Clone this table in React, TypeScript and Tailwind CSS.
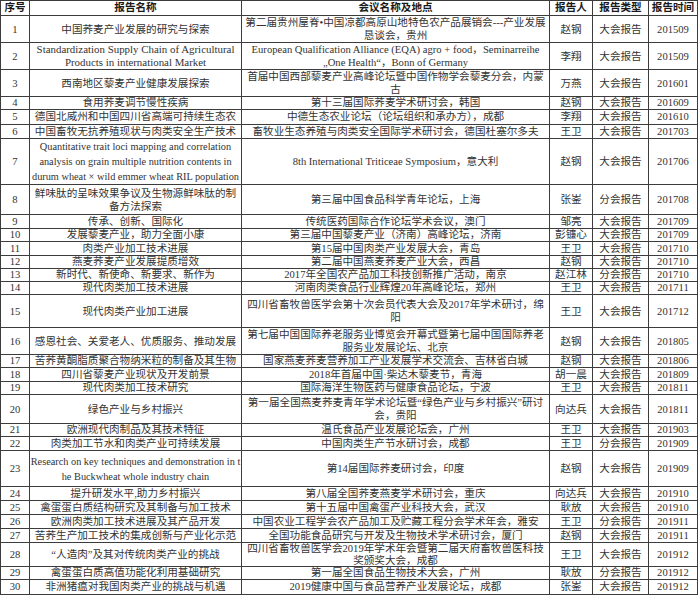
import React from 'react';

interface Row {
  no: number;
  title: string;
  meeting: string;
  person: string;
  kind: string;
  time: string;
  h: string;
  en?: string;
  lh?: string;
}

const ROWS: Row[] = [
  { no: 1, title: '中国荞麦产业发展的研究与探索', meeting: '第二届贵州屋脊•中国凉都高原山地特色农产品展销会---产业发展\n恳谈会，贵州', person: '赵钢', kind: '大会报告', time: '201509', h: 'h-[27px]' },
  { no: 2, title: 'Standardization Supply Chain of Agricultural\nProducts in international Market', meeting: 'European Qualification Alliance (EQA) agro + food，Seminarreihe\n„One Health“，Bonn of Germany', person: '李翔', kind: '大会报告', time: '201509', h: 'h-[27px]', en: 'text-[10.9px]' },
  { no: 3, title: '西南地区藜麦产业健康发展探索', meeting: '首届中国西部藜麦产业高峰论坛暨中国作物学会藜麦分会，内蒙\n古', person: '万燕', kind: '大会报告', time: '201601', h: 'h-[25px]' },
  { no: 4, title: '食用荞麦调节慢性疾病', meeting: '第十三届国际荞麦学术研讨会，韩国', person: '赵钢', kind: '大会报告', time: '201609', h: 'h-[13px]' },
  { no: 5, title: '德国北威州和中国四川省高端可持续生态农', meeting: '中德生态农业论坛（论坛组织和承办方），成都', person: '李翔', kind: '大会报告', time: '201610', h: 'h-[15px]' },
  { no: 6, title: '中国畜牧无抗养殖现状与肉类安全生产技术', meeting: '畜牧业生态养殖与肉类安全国际学术研讨会，德国杜塞尔多夫', person: '王卫', kind: '大会报告', time: '201703', h: 'h-[14px]' },
  { no: 7, title: 'Quantitative trait loci mapping and correlation\nanalysis on grain multiple nutrition contents in\ndurum wheat × wild emmer wheat RIL population', meeting: '8th International Triticeae Symposium，意大利', person: '赵钢', kind: '大会报告', time: '201706', h: 'h-[45px]', en: 'text-[10.3px]', lh: 'leading-[15px]' },
  { no: 8, title: '鲜味肽的呈味效果争议及生物源鲜味肽的制\n备方法探索', meeting: '第三届中国食品科学青年论坛，上海', person: '张崟', kind: '分会报告', time: '201708', h: 'h-[30px]' },
  { no: 9, title: '传承、创新、国际化', meeting: '传统医药国际合作论坛学术会议，澳门', person: '邹亮', kind: '大会报告', time: '201709', h: 'h-[14px]' },
  { no: 10, title: '发展藜麦产业，助力全面小康', meeting: '第三届中国藜麦产业（济南）高峰论坛，济南', person: '彭镰心', kind: '大会报告', time: '201709', h: 'h-[13px]' },
  { no: 11, title: '肉类产业加工技术进展', meeting: '第15届中国肉类产业发展大会，青岛', person: '王卫', kind: '大会报告', time: '201710', h: 'h-[14px]' },
  { no: 12, title: '燕麦荞麦产业发展提质增效', meeting: '第二届中国燕麦荞麦产业大会，西昌', person: '赵钢', kind: '大会报告', time: '201710', h: 'h-[13px]' },
  { no: 13, title: '新时代、新使命、新要求、新作为', meeting: '2017年全国农产品加工科技创新推广活动，南京', person: '赵江林', kind: '分会报告', time: '201710', h: 'h-[13px]' },
  { no: 14, title: '现代肉类加工技术进展', meeting: '河南肉类食品行业辉煌20年高峰论坛，郑州', person: '王卫', kind: '大会报告', time: '201711', h: 'h-[13px]' },
  { no: 15, title: '现代肉类产业加工进展', meeting: '四川省畜牧兽医学会第十次会员代表大会及2017年学术研讨，绵\n阳', person: '王卫', kind: '大会报告', time: '201712', h: 'h-[33px]' },
  { no: 16, title: '感恩社会、关爱老人、优质服务、推动发展', meeting: '第七届中国国际养老服务业博览会开幕式暨第七届中国国际养老\n服务业发展论坛、北京', person: '赵钢', kind: '大会报告', time: '201805', h: 'h-[27px]' },
  { no: 17, title: '苦荞黄酮脂质聚合物纳米粒的制备及其生物', meeting: '国家燕麦荞麦营养加工产业发展学术交流会、吉林省白城', person: '赵钢', kind: '大会报告', time: '201806', h: 'h-[13px]' },
  { no: 18, title: '四川省藜麦产业现状及开发前景', meeting: '2018年首届中国·柴达木藜麦节，青海', person: '胡一晨', kind: '大会报告', time: '201809', h: 'h-[14px]' },
  { no: 19, title: '现代肉类加工技术研究', meeting: '国际海洋生物医药与健康食品论坛，宁波', person: '王卫', kind: '大会报告', time: '201811', h: 'h-[13px]' },
  { no: 20, title: '绿色产业与乡村振兴', meeting: '第一届全国燕麦荞麦青年学术论坛暨“绿色产业与乡村振兴”研讨\n会，贵阳', person: '向达兵', kind: '大会报告', time: '201811', h: 'h-[29px]' },
  { no: 21, title: '欧洲现代肉制品及其技术特征', meeting: '温氏食品产业发展论坛会，广州', person: '王卫', kind: '大会报告', time: '201903', h: 'h-[13px]' },
  { no: 22, title: '肉类加工节水和肉类产业可持续发展', meeting: '中国肉类生产节水研讨会，成都', person: '王卫', kind: '分会报告', time: '201909', h: 'h-[14px]' },
  { no: 23, title: 'Research on key techniques and demonstration in t\nhe Buckwheat whole industry chain', meeting: '第14届国际荞麦研讨会，印度', person: '赵钢', kind: '大会报告', time: '201909', h: 'h-[36px]', en: 'text-[10.3px]', lh: 'leading-[15px]' },
  { no: 24, title: '提升研发水平,助力乡村振兴', meeting: '第八届全国荞麦燕麦学术研讨会，重庆', person: '向达兵', kind: '大会报告', time: '201910', h: 'h-[14px]' },
  { no: 25, title: '禽蛋蛋白质结构研究及其制备与加工技术', meeting: '第十五届中国禽蛋产业科技大会，武汉', person: '耿放', kind: '大会报告', time: '201910', h: 'h-[14px]' },
  { no: 26, title: '欧洲肉类加工技术进展及其产品开发', meeting: '中国农业工程学会农产品加工及贮藏工程分会学术年会，雅安', person: '王卫', kind: '分会报告', time: '201911', h: 'h-[14px]' },
  { no: 27, title: '苦荞生产加工技术的集成创新与产业化示范', meeting: '全国功能食品研究与开发及生物技术学术研讨会，厦门', person: '赵钢', kind: '大会报告', time: '201911', h: 'h-[14px]' },
  { no: 28, title: '“人造肉”及其对传统肉类产业的挑战', meeting: '四川省畜牧兽医学会2019年学术年会暨第二届天府畜牧兽医科技\n奖颁奖大会，成都', person: '王卫', kind: '大会报告', time: '201912', h: 'h-[23px]', lh: 'leading-[11.5px]' },
  { no: 29, title: '禽蛋蛋白质高值功能化利用基础研究', meeting: '第一届全国食品生物技术大会，广州', person: '耿放', kind: '分会报告', time: '201912', h: 'h-[13px]' },
  { no: 30, title: '非洲猪瘟对我国肉类产业的挑战与机遇', meeting: '2019健康中国与食品营养产业发展论坛，成都', person: '张崟', kind: '大会报告', time: '201912', h: 'h-[15px]' },
];

const cell = 'border border-[#3c3c3c] p-0 text-center align-middle whitespace-nowrap overflow-hidden';

const Lines = ({ text }: { text: string }) => (
  <>
    {text.split('\n').map((line, i) => (
      <React.Fragment key={i}>
        {i > 0 && <br />}
        {line}
      </React.Fragment>
    ))}
  </>
);

export default function App() {
  return (
    <div className="w-[700px] h-[600px] bg-white overflow-hidden">
      <table className="table-fixed border-collapse w-[697px] text-[10.6px] leading-[12px] text-[#333] font-['Liberation_Serif','Noto_Sans_CJK_SC',serif]">
        <colgroup>
          <col className="w-[29px]" />
          <col className="w-[212px]" />
          <col className="w-[308px]" />
          <col className="w-[43px]" />
          <col className="w-[56px]" />
          <col className="w-[49px]" />
        </colgroup>
        <thead>
          <tr className="h-[15px] font-bold text-[#1a1a1a]">
            <th className={cell}>序号</th>
            <th className={cell}>报告名称</th>
            <th className={cell}>会议名称及地点</th>
            <th className={cell}>报告人</th>
            <th className={cell}>报告类型</th>
            <th className={cell}>报告时间</th>
          </tr>
        </thead>
        <tbody>
          {ROWS.map((r) => {
            const multi = r.title.includes('\n') || r.meeting.includes('\n');
            const lh = r.lh ?? (multi ? 'leading-[13px]' : 'leading-[12px]');
            return (
              <tr key={r.no} className={`${r.h} ${lh}`}>
                <td className={cell}>{r.no}</td>
                <td className={`${cell} ${r.en ?? ''}`}>
                  <Lines text={r.title} />
                </td>
                <td className={cell}>
                  <Lines text={r.meeting} />
                </td>
                <td className={cell}>{r.person}</td>
                <td className={cell}>{r.kind}</td>
                <td className={cell}>{r.time}</td>
              </tr>
            );
          })}
        </tbody>
      </table>
    </div>
  );
}
